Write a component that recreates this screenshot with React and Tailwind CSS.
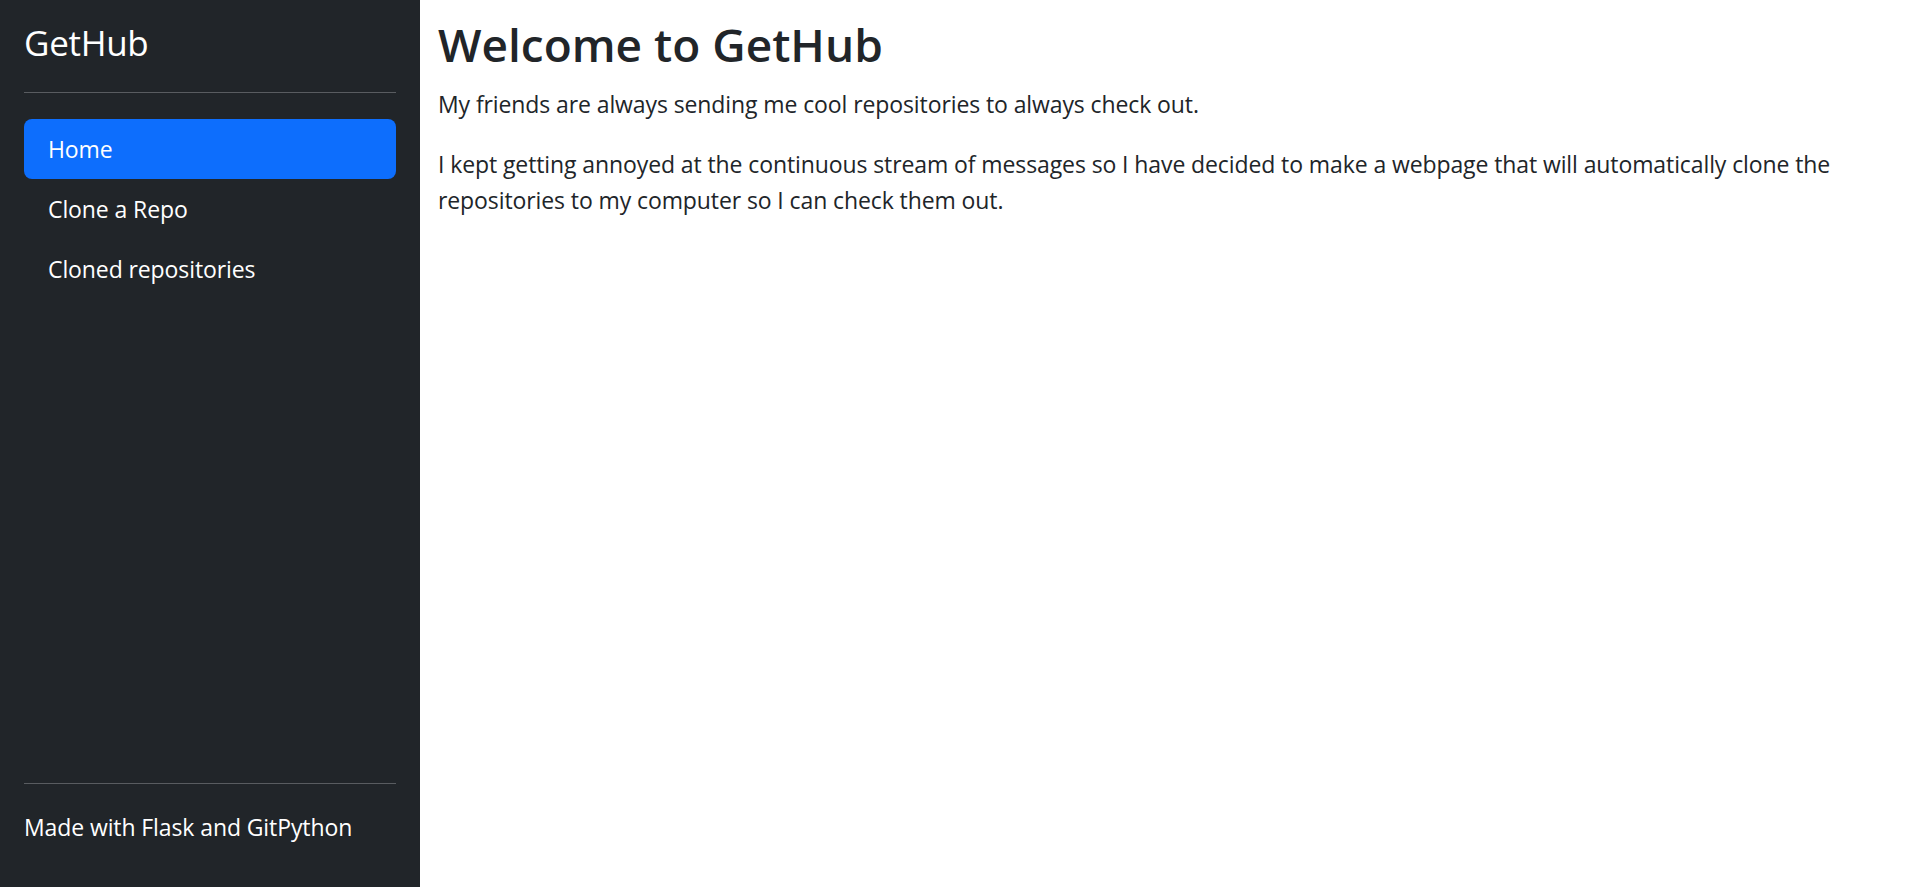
const navItems = ["Home", "Clone a Repo", "Cloned repositories"];

function App() {
  const active = "Home";

  return (
    <div
      className="flex h-screen w-full bg-white"
      style={{ fontFamily: '"Open Sans", sans-serif' }}
    >
      <div className="flex flex-col w-[420px] shrink-0 h-full bg-[#212529] text-white px-6">
        <div className="mt-6 text-[35px] leading-[38px] tracking-[-0.3px]">GetHub</div>
        <hr className="mt-[30px] border-t-[1.5px] border-[#595c60]" />
        <ul className="flex flex-col mt-[26px]">
          {navItems.map((item) => (
            <li key={item}>
              <a
                href="#"
                className={
                  "flex items-center h-[60px] px-6 rounded-[8px] text-[23px] tracking-[-0.1px] text-white " +
                  (item === active ? "bg-[#0d6efd]" : "")
                }
              >
                {item}
              </a>
            </li>
          ))}
        </ul>
        <div className="flex-grow" />
        <hr className="border-t-[1.5px] border-[#595c60]" />
        <div className="mt-[25px] mb-[42px] text-[23px] leading-[36px] tracking-[-0.1px]">
          Made with Flask and GitPython
        </div>
      </div>
      <div className="flex-grow px-[18px] text-[#212529]">
        <h1 className="mt-[14px] mb-3 text-[46px] leading-[60px] font-semibold">
          Welcome to GetHub
        </h1>
        <p className="mb-6 text-[23px] leading-[36px] tracking-[-0.1px]">
          My friends are always sending me cool repositories to always check
          out.
        </p>
        <p className="mb-6 text-[23px] leading-[36px] tracking-[-0.1px]">
          I kept getting annoyed at the continuous stream of messages so I have
          decided to make a webpage that will automatically clone the
          repositories to my computer so I can check them out.
        </p>
      </div>
    </div>
  );
}

export default App;
